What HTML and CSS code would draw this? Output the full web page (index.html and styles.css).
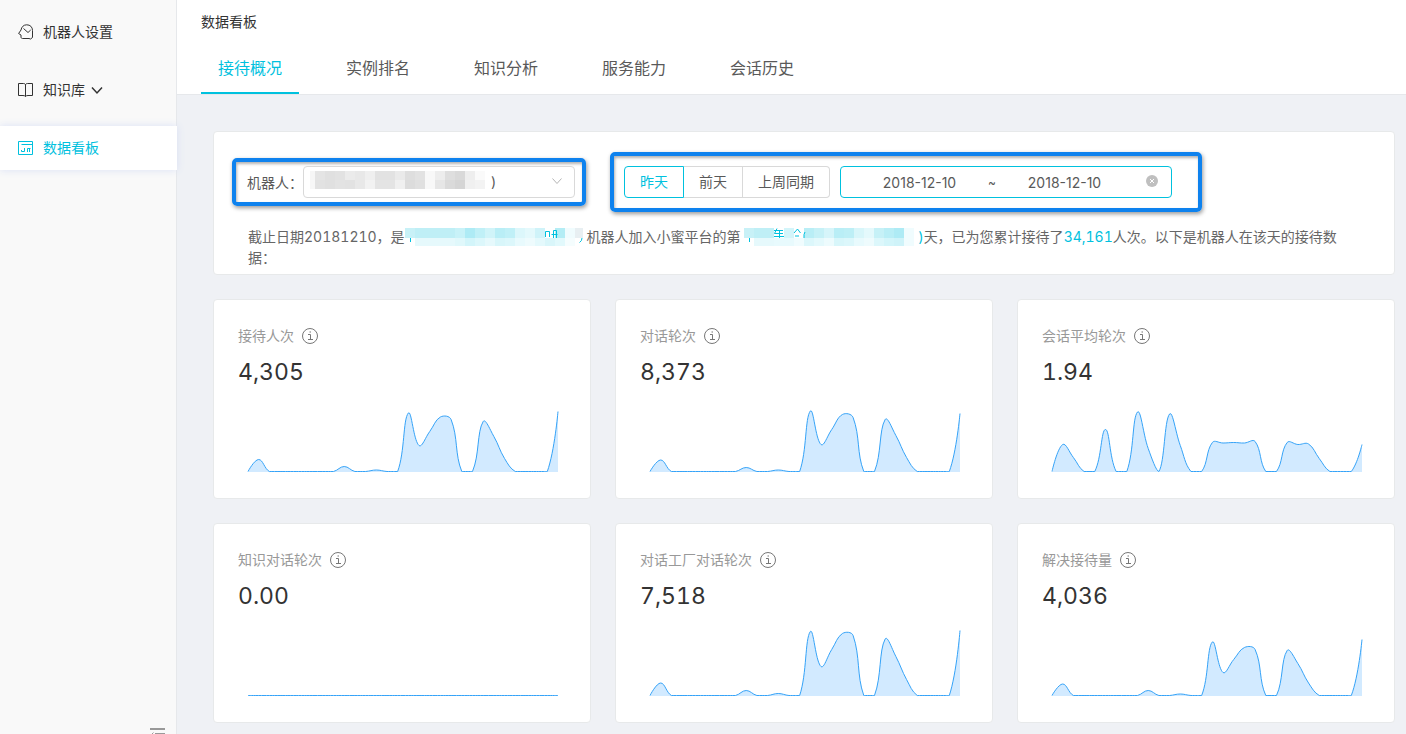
FILE: index.html
```
<!DOCTYPE html>
<html lang="zh-CN">
<head>
<meta charset="utf-8">
<title>数据看板</title>
<link rel="stylesheet" href="styles.css">
</head>
<body>
<div class="app">
  <aside class="sidebar">
    <nav class="menu">
      <a class="menu-item" href="#settings">
        <svg class="menu-icon" viewBox="0 0 16 16"><path d="M3 6C3.500 3 5.500 .8 8.700 .8c3.500 0 5.800 2.200 5.800 5.700v7l-2 1.500-1.500-.5H4.500c-1 0-1.500-.6-1.500-1.500v-2L.6 9.500 3 6z"/><path d="M5.500 4.500l4.500 4 2.700-2.500"/></svg>
        <span>机器人设置</span>
      </a>
      <a class="menu-item" href="#knowledge">
        <svg class="menu-icon" viewBox="0 0 16 16"><path d="M5.500 1.500h-5v12H5c1.200 0 2 .3 2.500 1 .5-.7 1.300-1 2.500-1h4.500v-12h-5c-1.200 0-2 .6-2 1.500v11.500M7.500 3c0-.9-.8-1.500-2-1.500"/></svg>
        <span>知识库</span>
        <svg class="caret" viewBox="0 0 12 12"><path d="M1 3.500l5 5.500 5-5.500"/></svg>
      </a>
      <a class="menu-item active" href="#board">
        <svg class="menu-icon" viewBox="0 0 16 16"><path d="M.5 1.500h14v13H.5zM3.500 4.500h11M6.500 8v3.500h-3M3.500 10v1.500M9.500 12V8.500h3M11.500 8.500V12"/></svg>
        <span>数据看板</span>
      </a>
    </nav>
    <button class="fold" type="button" aria-label="收起菜单">
      <svg viewBox="0 0 16 14"><path d="M0 .5h15M0 1.500h15M5 5.500h10M5 9.500h10M0 13.500h15M3.500 4.500L1 7l2.500 2.500"/></svg>
    </button>
  </aside>

  <div class="page">
    <header class="header">
      <h1 class="title">数据看板</h1>
      <nav class="tabs">
        <a class="tab current" href="#overview">接待概况</a>
        <a class="tab" href="#ranking">实例排名</a>
        <a class="tab" href="#analysis">知识分析</a>
        <a class="tab" href="#service">服务能力</a>
        <a class="tab" href="#history">会话历史</a>
      </nav>
    </header>

    <main class="content">
      <section class="card filter">
        <div class="filter-row">
          <div class="frame frame-robot">
            <label for="robot">机器人：</label>
            <div class="select-wrap">
              <select id="robot" class="select"><option>)</option></select>
              <svg class="mosaic-select" data-cols="f6f6f6,e4e4e4,e0e0e0,e2e2e2,ebebeb,e8e8e8,efefef,e2e2e2,e2e2e2,eaeaea,dedede,e2e2e2,f8f8f8,ededed,dedede,d9d9d9,eeeeee,fafafa|f7f7f7,e2e2e2,e0e0e0,e3e3e3,e2e2e2,e8e8e8,f2f2f2,e4e4e4,e4e4e4,f0f0f0,dcdcdc,e0e0e0,f8f8f8,e6e6e6,dadada,d5d5d5,f0f0f0,f3f3f3" data-first="5" viewBox="0 0 178 18" aria-hidden="true"></svg>
              <svg class="select-arrow" viewBox="0 0 12 12" aria-hidden="true"><path d="M1.500 3.500L6 8.500l4.500-5"/></svg>
            </div>
          </div>
          <div class="frame frame-date">
            <div class="segments">
              <button type="button" class="segment chosen">昨天</button>
              <button type="button" class="segment">前天</button>
              <button type="button" class="segment">上周同期</button>
            </div>
            <div class="range">
              <input type="text" value="2018-12-10" aria-label="开始日期">
              <span class="tilde">~</span>
              <input type="text" value="2018-12-10" aria-label="结束日期">
              <button type="button" class="clear" aria-label="清除">
                <svg viewBox="0 0 12 12"><circle cx="6" cy="6" r="6"/><path d="M4 4l4 4M8 4l-4 4"/></svg>
              </button>
            </div>
          </div>
        </div>
        <p class="summary">截止日期20181210，是<svg class="mosaic-text" data-cols="c8f1f7,bfeff6,bfeff6,bfeff6,bfeff6,c8f2f8,aeebf5,c0f0f7,d0f4f9,b9eef6,c0f0f7,dcf7fb,e4f9fc,cff3f9,,b4edf5,f0fcfe,e8eff2|,e6f9fc,e6f9fc,e6f9fc,e6f9fc,e0f8fb,d3f5fa,dcf7fb,e6f9fc,d8f6fa,dcf7fb,e8fafd,eefbfd,e4f9fc,d9f6fa,e2f9fc,f5fdfe," viewBox="0 0 178 20" aria-hidden="true"><path d="M5.500 11v4M140.500 10V4.500h4V10M148.500 11V3.500h3V11M146.500 7.500h6M177 11q0 3-2.500 4.500"/></svg>&nbsp;机器人加入小蜜平台的第&nbsp;<svg class="mosaic-text narrow" data-cols="c8f1f7,bfeff6,bfeff6,,d3f5fa,,b9eef6,c6f1f7,d6f5fa,b9eef6,bdeff6,d8f6fa,e4f9fc,c6f1f7,b9eef6,aeebf5,f0fcfe|,e6f9fc,e6f9fc,e8fafd,e8fafd,f0fcfe,dcf7fb,e4f9fc,edfbfd,d8f6fa,dcf7fb,e8fafd,eefbfd,dcf7fb,d3f5fa,cff3f9,f0fcfe" viewBox="0 0 174 20" aria-hidden="true"><path d="M5.500 11v4M30 3.500h9M33 1.500l-2.500 5h8.500M35.500 4v7M30 9.500h10M50 6l3.500-4 3 4M51 9h4M61 5q-1.500 2-1 6"/></svg><span class="accent">)</span>天，已为您累计接待了<span class="accent">34,161</span>人次。以下是机器人在该天的接待数据：</p>
      </section>

      <section class="grid" id="grid"></section>
    </main>
  </div>
</div>
<script src="app.js"></script>
</body>
</html>
```

FILE: styles.css
```
* { box-sizing: border-box; }
html, body { height: 100%; }
body {
  margin: 0;
  overflow: hidden;
  color: #595959;
  background: #eff1f5;
  font: 14px/21px Inter, "Noto Sans CJK SC", sans-serif;
}
a { color: inherit; text-decoration: none; }
button, input, select { font: inherit; color: inherit; margin: 0; }
svg { display: block; }

.app { display: flex; min-height: 100vh; }

.sidebar {
  position: relative;
  flex: 0 0 177px;
  background: #f9f9f9;
  border-right: 1px solid #e6e8eb;
}
.menu { display: flex; flex-direction: column; gap: 14px; padding-top: 10px; }
.menu-item {
  display: flex;
  align-items: center;
  gap: 9px;
  height: 44px;
  padding: 0 0 1px 18px;
  color: #333;
}
.menu-item.active {
  color: #00c1de;
  background: #fff;
  margin-right: -1px;
  box-shadow: 0 0 8px #d9e0f5;
}
.menu-icon { width: 16px; height: 16px; fill: none; stroke: currentColor; stroke-width: 1; }
.caret { width: 12px; height: 12px; margin-left: -3px; fill: none; stroke: currentColor; stroke-width: 1.500; }
.fold {
  position: absolute;
  right: 10px;
  bottom: -8px;
  width: 16px;
  height: 14px;
  padding: 0;
  border: 0;
  background: none;
}
.fold svg { width: 16px; height: 14px; fill: none; stroke: #999; stroke-width: 1; }

.page { flex: 1; min-width: 0; }
.header { padding: 11px 24px 0; background: #fff; border-bottom: 1px solid #e6e8eb; }
.title { margin: 0; font-size: 14px; font-weight: 400; line-height: 21px; color: #333; }
.tabs { display: flex; gap: 30px; margin-top: 10px; }
.tab {
  height: 52px;
  padding: 0 17px;
  font-size: 16px;
  line-height: 52px;
  border-bottom: 2px solid transparent;
}
.tab.current { color: #00c1de; border-color: #00c1de; }

.content { padding: 36px 11px 11px 36px; }
.card { background: #fff; border: 1px solid #e7e9ea; border-radius: 4px; }

.filter { padding: 20px 46px 6px 18px; }
.filter-row { display: flex; align-items: center; gap: 24px; }
.frame {
  display: flex;
  align-items: center;
  border: 4px solid #0e82ee;
  border-radius: 5px;
  box-shadow: 1px 2px 4px rgba(0, 0, 0, .4), inset 1px 2px 3px rgba(0, 0, 0, .3);
}
.frame-robot { padding: 4px 7px 4px 11px; }
.frame-date { gap: 10px; padding: 10px 26px 10px 10px; }
.select-wrap { position: relative; width: 272px; }
.select {
  appearance: none;
  width: 100%;
  height: 32px;
  padding: 0 30px 2px 187px;
  background: #fff;
  border: 1px solid #d9d9d9;
  border-radius: 4px;
}
.mosaic-select { position: absolute; left: 7px; top: 5px; width: 178px; height: 18px; pointer-events: none; }
.select-arrow {
  position: absolute;
  right: 12px;
  top: 9px;
  width: 12px;
  height: 12px;
  fill: none;
  stroke: #b5b5b5;
  pointer-events: none;
}
.segments { display: flex; }
.segment {
  height: 32px;
  padding: 0 15px 2px;
  background: #fff;
  border: 1px solid #d9d9d9;
  border-left-width: 0;
}
.segment:last-child { border-radius: 0 4px 4px 0; }
.segment.chosen { color: #00c1de; border: 1px solid #00c1de; border-radius: 4px 0 0 4px; }
.range {
  display: flex;
  align-items: center;
  width: 332px;
  height: 32px;
  padding: 0 13px 0 14px;
  border: 1px solid #00c1de;
  border-radius: 4px;
}
.range input {
  width: 129px;
  padding: 0;
  border: 0;
  background: none;
  text-align: center;
  font-size: 14px;
}
.tilde { width: 16px; font-size: 12px; text-align: center; }
.clear { margin-left: auto; padding: 0 0 2px; border: 0; background: none; }
.clear svg { width: 12px; height: 12px; fill: #bfbfbf; }
.clear path { stroke: #fff; }

.summary { margin: 14px 0 0 16px; font-variant-numeric: tabular-nums; color: #666; }
.accent { color: #00c1de; }
.mosaic-text { display: inline-block; width: 178px; height: 20px; vertical-align: bottom; fill: none; stroke: #00c1de; }
.mosaic-text.narrow { width: 174px; }

.grid { display: grid; grid-template-columns: repeat(3, 1fr); gap: 24px; margin-top: 24px; }
.metric { padding: 25px 32px 26px 34px; }
.metric-name { display: flex; align-items: center; gap: 8px; margin: 0 -10px; color: #999; font-size: 14px; font-weight: 400; line-height: 21px; }
.info { width: 16px; height: 16px; fill: none; stroke: #777; }
.metric-value {
  margin: 10px -10px 0;
  font-size: 23px;
  line-height: 32px;
  color: #333;
  font-variant-numeric: tabular-nums;
}
.chart { width: 100%; height: 70px; margin-top: 14px; overflow: visible; }
.chart-area { fill: #d2eaff; }
.chart-line { fill: none; stroke: #35a3f8; stroke-width: 1; vector-effect: non-scaling-stroke; }
```

FILE: app.js
```
const metrics = [
  { name: '接待人次', value: '4,305', data: [0,12,0,0,0,0,0,0,0,5,0,0,1.5,0,0,58.5,26,40,54.5,52,0,0,50,35,13,0,0,0,0,60] },
  { name: '对话轮次', value: '8,373', data: [0,11.5,0,0,0,0,0,0,0,4,0,0,1.5,0,0,60.5,27,42,57,54,0,0,52,36,14,0,0,0,0,58] },
  { name: '会话平均轮次', value: '1.94', data: [0,27,14,0,0,42,0,0,59.5,23,0,57.5,26,0,0,29,28.5,29,28.5,30,0,0,29,27,27.5,13,0,0,0,27] },
  { name: '知识对话轮次', value: '0.00', data: new Array(30).fill(0) },
  { name: '对话工厂对话轮次', value: '7,518', data: [0,12.5,0,0,0,0,0,0,0,5,0,0,2,0,0,64,29,46,62,60,0,0,56.5,39,16,0,0,0,0,65] },
  { name: '解决接待量', value: '4,036', data: [0,11.5,0,0,0,0,0,0,0,5,0,0,1.5,0,0,53.5,23,36,48,46,0,0,45,32,12.5,0,0,0,0,56] }
];

const WIDTH = 310;
const BASE = 69.5;

// Catmull-Rom smoothing, with control points kept above the baseline.
function smoothPath(values) {
  const pts = values.map((v, i) => [i * WIDTH / (values.length - 1), BASE - v]);
  const dist = (a, b) => Math.hypot(a[0] - b[0], a[1] - b[1]);
  const clamp = p => [Math.max(0, Math.min(WIDTH, p[0])), Math.min(BASE, p[1])];
  const ctrl = pts.map((p, i) => {
    const prev = pts[i - 1], next = pts[i + 1];
    if (!prev || !next) return [p, p];
    const v = [(next[0] - prev[0]) * 0.4, (next[1] - prev[1]) * 0.4];
    const d0 = dist(p, prev), d1 = dist(p, next), sum = d0 + d1;
    return [
      clamp([p[0] - v[0] * d0 / sum, p[1] - v[1] * d0 / sum]),
      clamp([p[0] + v[0] * d1 / sum, p[1] + v[1] * d1 / sum])
    ];
  });
  let d = 'M' + pts[0];
  for (let i = 1; i < pts.length; i++) {
    d += 'C' + [ctrl[i - 1][1], ctrl[i][0], pts[i]].join(' ');
  }
  return d;
}

document.getElementById('grid').innerHTML = metrics.map(m => {
  const line = smoothPath(m.data);
  return `<article class="card metric">
    <h2 class="metric-name">${m.name}<svg class="info" viewBox="0 0 16 16"><circle cx="8" cy="8" r="7.500"/><path d="M6 6.500H8.500V11.500M6 11.500h5M7.500 4h1.500"/></svg></h2>
    <div class="metric-value">${m.value}</div>
    <svg class="chart" viewBox="0 0 310 70" preserveAspectRatio="none"><path class="chart-area" d="${line}V70H0Z"/><path class="chart-line" d="${line}"/></svg>
  </article>`;
}).join('');

// Pixelated blocks that hide private names.
document.querySelectorAll('svg[data-cols]').forEach(svg => {
  const first = Number(svg.dataset.first || 10);
  const height = svg.viewBox.baseVal.height;
  const rowHeights = [first === 5 ? 9 : 10, first === 5 ? 9 : 8];
  let rects = '';
  svg.dataset.cols.split('|').forEach((row, r) => {
    row.split(',').forEach((color, i) => {
      if (!color) return;
      const x = i === 0 ? 0 : first + (i - 1) * 10;
      const w = i === 0 ? first : 10;
      const y = r === 0 ? (height === 20 ? 1 : 0) : rowHeights[0] + (height === 20 ? 1 : 0);
      rects += `<rect x="${x}" y="${y}" width="${w}" height="${rowHeights[r]}" fill="#${color}" stroke="none"/>`;
    });
  });
  svg.insertAdjacentHTML('afterbegin', rects);
});
```
